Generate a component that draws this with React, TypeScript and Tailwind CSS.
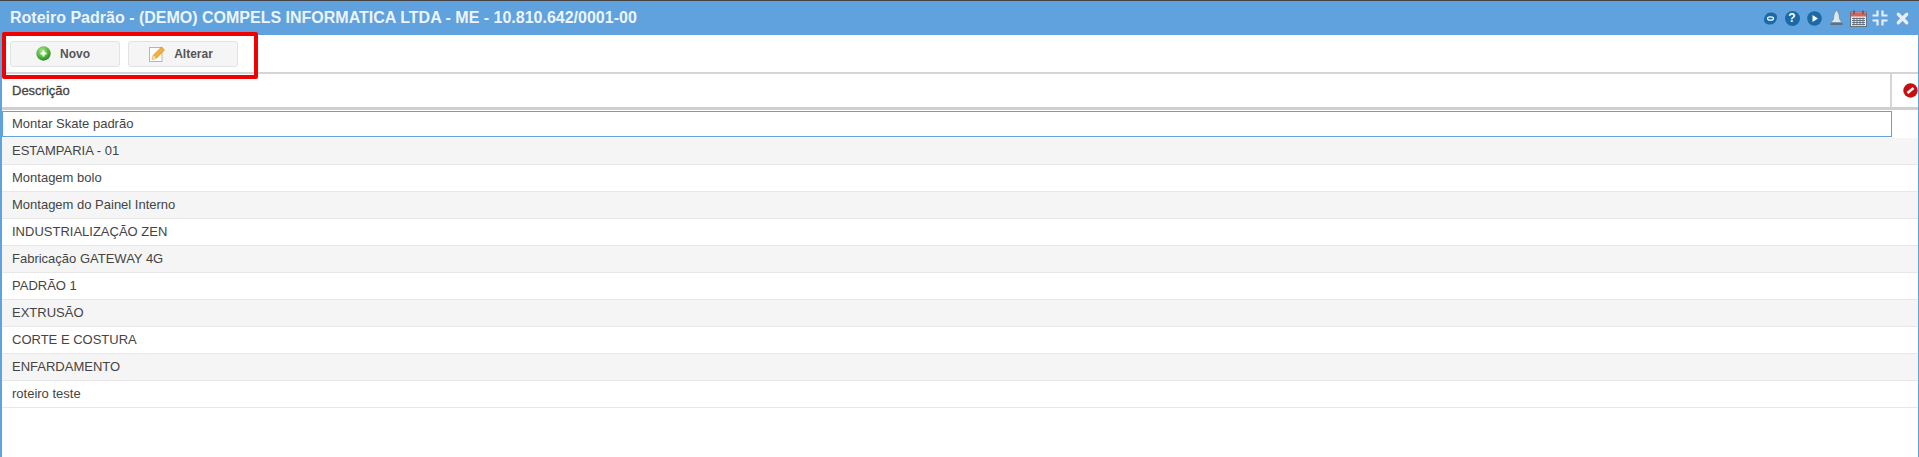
import type { ReactNode } from "react";
import { X } from "lucide-react";

const rows = [
  "ESTAMPARIA - 01",
  "Montagem bolo",
  "Montagem do Painel Interno",
  "INDUSTRIALIZAÇÃO ZEN",
  "Fabricação GATEWAY 4G",
  "PADRÃO 1",
  "EXTRUSÃO",
  "CORTE E COSTURA",
  "ENFARDAMENTO",
  "roteiro teste",
];

function NovoIcon() {
  return (
    <svg width="15" height="15" viewBox="0 0 15 15">
      <defs>
        <radialGradient id="novo" cx="0.4" cy="0.3" r="0.8">
          <stop offset="0" stopColor="#a5e58a" />
          <stop offset="0.6" stopColor="#4cb034" />
          <stop offset="1" stopColor="#1c7a1c" />
        </radialGradient>
      </defs>
      <circle cx="7.5" cy="7.5" r="7.2" fill="url(#novo)" />
      <path d="M7.5 4.5v6M4.5 7.5h6" stroke="#fff" strokeWidth="2" />
    </svg>
  );
}

function AlterarIcon() {
  return (
    <svg width="16" height="16" viewBox="0 0 16 16">
      <rect x="0.5" y="1.5" width="12.5" height="14" fill="#fff" stroke="#b5b5b5" />
      <path d="M3 13.500l1.200-4.300L12.500 1 15.500 4l-8 8.200z" fill="#f0b040" stroke="#c98a20" strokeWidth="0.6" />
      <path d="M3 13.500l1.200-4.300 3.300 3z" fill="#f5dcae" />
    </svg>
  );
}

function HeaderIcons() {
  return (
    <div className="flex items-center">
      <div className="w-[22px] flex justify-center">
        <svg width="15" height="15" viewBox="0 0 15 15">
          <path d="M7.500 1.500c4 0 6.500 1.500 6.500 4.500 0 4-3 7.500-7 7.500-3.500 0-6-1.500-6-4.500 0-4 3-7.500 6.500-7.500z" fill="#1b6aa5" />
          <ellipse cx="7.500" cy="7.500" rx="3" ry="1.700" fill="none" stroke="#fff" strokeWidth="1.200" />
        </svg>
      </div>
      <div className="w-[22px] flex justify-center">
        <div className="w-[15px] h-[15px] rounded-full bg-[#1b6aa5] text-white text-[12px] leading-[15px] font-bold text-center">?</div>
      </div>
      <div className="w-[22px] flex justify-center">
        <svg width="15" height="15" viewBox="0 0 15 15">
          <circle cx="7.5" cy="7.5" r="7.300" fill="#1b6aa5" />
          <path d="M5.500 4l5.500 3.500-5.500 3.500z" fill="#fff" />
        </svg>
      </div>
      <div className="w-[22px] flex justify-center">
        <svg width="15" height="16" viewBox="0 0 15 16">
          <path d="M7.500 .5c-1 0-1 1-1 1.500C4.800 3 5 5 4.500 8.500c-.3 2-1.800 2.500-2.500 4h11c-.7-1.500-2.200-2-2.500-4C10 5 10.200 3 8.500 2c0-.5 0-1.500-1-1.500z" fill="#dfe7ef" stroke="#71818f" strokeWidth="0.7" />
          <rect x="1.500" y="13" width="12" height="2" fill="#5f7080" />
        </svg>
      </div>
      <div className="w-[22px] flex justify-center">
        <svg width="17" height="17" viewBox="0 0 17 17">
          <rect x="0.500" y="2" width="16" height="14.500" fill="#e8edf2" stroke="#66747f" />
          <rect x="1" y="2.500" width="15" height="4" fill="#d9605f" />
          <path d="M4 0.500v3.500M13 0.500v3.500" stroke="#4b5863" strokeWidth="1.500" />
          <path d="M2 8.500h13M2 10.500h13M2 12.500h13M2 14.500h13M4 7.500v8M7 7.500v8M10 7.500v8M13 7.500v8" stroke="#66737e" />
        </svg>
      </div>
      <div className="w-[22px] flex justify-center">
        <svg width="16" height="16" viewBox="0 0 16 16">
          <path d="M5.500 0.500v5H0.500M10.500 0.500v5h5M5.500 15.500v-5H0.500M10.500 15.500v-5h5" fill="none" stroke="#e6eef7" strokeWidth="2.200" />
        </svg>
      </div>
      <div className="w-[22px] flex justify-center">
        <X className="w-[17px] h-[17px] text-[#e6eef7]" strokeWidth={4.500} />
      </div>
    </div>
  );
}

function ToolbarButton({ icon, label }: { icon: ReactNode; label: string }) {
  return (
    <button className="w-[110px] h-[26px] flex items-center justify-center gap-[9px] pr-[4px] bg-[#f5f5f5] border border-[#e3e3e3] rounded-[3px] text-[12px] font-bold text-[#555]">
      {icon}
      {label}
    </button>
  );
}

export default function App() {
  return (
    <div className="relative h-[457px] w-[1919px] overflow-hidden bg-white font-['Liberation_Sans',Arial,sans-serif] text-[#444]">
      <div className="h-[1px] bg-[#444]" />
      <div className="h-[34px] bg-[#5fa2dd] flex items-center justify-between pl-[10px] pr-[6px]">
        <span className="text-[16px] font-bold text-[#eef4fb]">
          Roteiro Padrão - (DEMO) COMPELS INFORMATICA LTDA - ME - 10.810.642/0001-00
        </span>
        <HeaderIcons />
      </div>
      <div className="flex h-[422px]">
        <div className="w-[2px] bg-[#5fa2dd]" />
        <div className="flex-1 min-w-0">
          <div className="h-[39px] flex items-center gap-[8px] pl-[8px] border-b-2 border-[#d5d5d5]">
            <ToolbarButton icon={<NovoIcon />} label="Novo" />
            <ToolbarButton icon={<AlterarIcon />} label="Alterar" />
          </div>
          <div className="h-[36px] flex border-b-[3px] border-[#cfcfcf]">
            <div className="flex-1 pl-[10px] flex items-center text-[13px] [-webkit-text-stroke:0.3px_#444] border-r-2 border-[#d5d5d5]">Descrição</div>
            <div className="w-[26px] flex items-center justify-end">
              <svg width="15" height="15" viewBox="0 0 15 15">
                <circle cx="7.5" cy="7.5" r="7.200" fill="#c80f0f" />
                <path d="M4.500 10l6-5" stroke="#fff" strokeWidth="2.500" />
              </svg>
            </div>
          </div>
          <div className="h-[28px] pt-[1px]">
            <div className="h-[26px] flex items-center w-[1890px] border border-[#5fa2dd] pl-[9px] text-[13px]">Montar Skate padrão</div>
          </div>
          {rows.map((row, i) => (
            <div
              key={row}
              className={`h-[27px] flex items-center pl-[10px] text-[13px] border-b border-[#e8e8e8] ${i % 2 === 0 ? "bg-[#f5f5f5]" : "bg-white"}`}
            >
              {row}
            </div>
          ))}
        </div>
        <div className="w-[1px] bg-[#5fa2dd]" />
      </div>
      {/* marcacao vermelha em volta dos botoes */}
      <div className="absolute left-[2px] top-[32px] w-[256px] h-[47px] border-4 border-[#f00000] rounded-[2px]" />
    </div>
  );
}
